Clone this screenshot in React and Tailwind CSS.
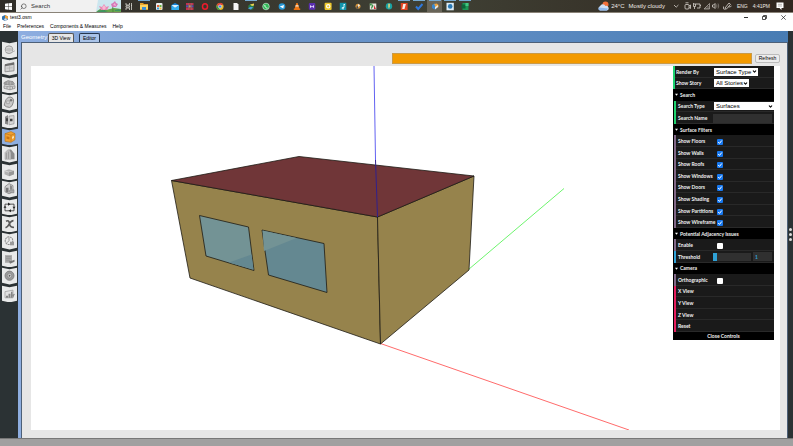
import React from "react";
import { ChevronDown, Search } from "lucide-react";

/* ---------- taskbar ---------- */

const taskIcons = [
  { name: "Task view", art: (<g fill="none" stroke="#d8d8d0" strokeWidth="0.8"><path d="M1 1v2h3.500V1M1 8V6h3.500v2M1 3.800h3.500v1.400H1zM6.500 1v7M6 3.500h1" /></g>) },
  { name: "File Explorer", running: true, art: (<><path d="M0 1h3l1 1h4v6H0z" fill="#e9a52d" /><path d="M0 3h8v4H0z" fill="#fbd565" /><path d="M2 5h4v3H2z" fill="#3d91d8" /></>) },
  { name: "Store", art: (<><rect x="1" y="1" width="6.500" height="7" rx="1" fill="#e9eef0" /><path d="M2 3h2v2H2z" fill="#e4603a" /><path d="M4.500 3h2v2h-2z" fill="#67b33c" /><path d="M2 5.500h2v2H2z" fill="#359de0" /><path d="M4.500 5.500h2v2h-2z" fill="#f0b83a" /></>) },
  { name: "Mail", art: (<><path d="M0.500 3L4 1l4 2v5H.5z" fill="#1683d8" /><path d="M.5 3h7.500L4 6z" fill="#d9f1ff" /><path d="M.5 3.500L4 6l4-2.500V8H.5z" fill="#32aef0" /></>) },
  { name: "Archives", art: (<><path d="M0 1h7.500v2.300H0z" fill="#c3314f" /><path d="M0 3.300h7.500v2.200H0z" fill="#5b4bb0" /><path d="M0 5.500h7.500V8H0z" fill="#c3314a" /><path d="M2 1h1v7H2zM5 1h1v7H5z" fill="#8a7a5a" opacity=".6" /><path d="M3.200 3.300h1.300v2.200H3.200z" fill="#d5b24a" /></>) },
  { name: "Opera", art: (<ellipse cx="4" cy="4.500" rx="2.500" ry="2.800" fill="none" stroke="#ee1c2c" strokeWidth="1.500" />) },
  { name: "Chrome", art: (<><circle cx="4" cy="4.500" r="3.600" fill="#e4b92b" /><path d="M.8 3A3.600 3.600 0 0 1 7.400 3H4L2.500 5.500z" fill="#de4336" /><path d="M.8 3l2 3.200 1.500 1.900A3.600 3.600 0 0 1 .8 3" fill="#299d50" /><circle cx="4" cy="4.500" r="1.600" fill="#3f83e8" stroke="#fff" strokeWidth="0.500" /></>) },
  { name: "Document", art: (<path d="M1.500 1H5l1.500 1.500V8h-5z" fill="#f6f6f6" />) },
  { name: "Downloads", running: true, art: (<><circle cx="4" cy="5" r="2.800" fill="#2a7c46" /><path d="M1 6.500l2-1.500 3 0-2 2.500z" fill="#4c9be4" /><path d="M3 2.500l4-1v2L5 4z" fill="#e8d352" /></>) },
  { name: "WhatsApp", art: (<><circle cx="4" cy="4.500" r="3.300" fill="#31b957" stroke="#dff4e4" strokeWidth="0.600" /><path d="M2.800 3c0 2 1 3 2.700 3.200" fill="none" stroke="#fff" strokeWidth="0.900" /></>) },
  { name: "Telegram", art: (<><circle cx="4" cy="4.500" r="3.300" fill="#2798d5" /><path d="M1.800 4.500L6 3 5.300 6.500 3.700 5.500z" fill="#fff" /></>) },
  { name: "Media player", art: (<><path d="M3.400 1h1.200L6.500 7h-5z" fill="#f07a16" /><path d="M2.700 3.300h2.600l.5 1.300H2.200z" fill="#f5ebdd" /><path d="M.8 6.500h6.400V8H.8z" fill="#e77212" /></>) },
  { name: "Video editor", art: (<><rect x=".8" y="1" width="6.500" height="6.800" rx="1" fill="#5b2fae" /><path d="M2 3l2 1.400L6 3v3L4 4.800 2 6z" fill="#e4d9fa" /></>) },
  { name: "Capture", art: (<><rect x=".6" y=".8" width="7" height="7.200" rx="1" fill="#edc72b" /><circle cx="4.200" cy="4.300" r="1.700" fill="none" stroke="#fff" strokeWidth="1.100" /></>) },
  { name: "Music", art: (<><rect x=".8" y=".8" width="6.500" height="7.200" fill="#1295ad" /><path d="M5 2v3.500H3.200v1.300H5M5 2.500h1" fill="none" stroke="#e5fbff" strokeWidth=".9" /></>) },
  { name: "Modeler", art: (<><circle cx="4" cy="4.300" r="2.500" fill="#d1923c" /><path d="M4 2l2.200 1.500L4 5z" fill="#f0ede5" /><path d="M2 5l2-1v3z" fill="#474b58" /></>) },
  { name: "Charts", art: (<><path d="M.8 1.500h6.500v6H.8z" fill="#e6e6dd" /><path d="M3.500 2l1 2-2 3-.5-1z" fill="#3b8f46" /><path d="M.8 1.500h2v2h-2z" fill="#3b8f46" /><path d="M5 3l2 4H5z" fill="#d62c32" /></>) },
  { name: "Energy", art: (<><circle cx="4" cy="4.300" r="3.200" fill="#1ba3a3" /><path d="M3.300 1.800h1.500v2.500L4 7l-.7-2z" fill="#f3d878" /></>) },
  { name: "PDF reader", running: true, art: (<><rect x=".8" y="1" width="6.800" height="7" fill="#e34623" /><path d="M3.200 2h2.700L4.500 7H2.200z" fill="#f5ede8" /></>) },
  { name: "To do", running: true, art: (<path d="M1 4.500L3.200 7 7.500 2" fill="none" stroke="#2f78db" strokeWidth="2" />) },
  { name: "Energy modeling application", running: true, active: true, art: (<><path d="M1 3l2.500-1.500L6 3v3L3.500 7.500 1 6z" fill="#3b88ce" /><path d="M3.200 2l2.500-.5L7.500 3v2L5 6z" fill="#f0a33b" /><path d="M4 5l3-2v2L4 7.500z" fill="#e9e6df" /></>) },
  { name: "Package manager", running: true, art: (<><rect x=".5" y=".8" width="7.300" height="7.500" fill="#dcecf6" /><circle cx="4.200" cy="4.400" r="2.300" fill="#2b7ab6" /></>) },
  { name: "Spreadsheet", running: true, art: (<><path d="M1.500 1h6v7h-6z" fill="#1d9856" /><path d="M.5 2.500h4v4h-4z" fill="#0d643a" /><path d="M4.500 1h3v3h-3z" fill="#42c783" /></>) },
];

function Taskbar() {
  return (
    <header className="flex h-[13px] shrink-0 items-stretch border-b border-[#8a8378] bg-[linear-gradient(90deg,#302d28,#3f4034_55%,#30261f)] text-[6px] leading-[12px] text-white">
      <button aria-label="Start" className="flex w-4 items-center justify-center">
        <svg viewBox="0 0 8 8" className="size-[7px]" fill="#fff">
          <path d="M0 .8l3.700-.5v3.400H0zM4.200.2L8 0v3.700H4.200zM0 4.200h3.700v3.500L0 7.200zM4.200 4.200H8V8l-3.800-.4z" />
        </svg>
      </button>
      <div className="flex w-[105px] items-center bg-[#f1f1f1] text-[#333]">
        <label className="flex min-w-0 flex-1 items-center gap-1 pl-1">
          <Search className="size-[7px] shrink-0 -scale-x-100" strokeWidth={2} />
          <input aria-label="Search" placeholder="Search" className="h-3 w-full min-w-0 text-[6px] leading-[12px] outline-none placeholder:text-[#333]" />
        </label>
        <svg viewBox="0 0 25 12" className="h-3 w-[25px] shrink-0">
          <path d="M2 0h23v12H0z" fill="#cbe6ef" />
          <path d="M0 12l4-3 6 1 8-2 7 1v3z" fill="#69a64c" />
          <path d="M17 12c0-4-1-5 1-7M8 11l2-2" stroke="#488a3c" fill="none" />
          <path d="M3 6l3 1 2-3 2 3 3-1-2 4H5z" fill="#e889b4" />
          <path d="M6 8l2-3 2 3-2 2z" fill="#f8bad3" />
          <path d="M15 4l2-1 2-2 1 2 2 1-2 3h-4z" fill="#d477b7" />
          <path d="M17 5l2-2 1 3z" fill="#f6afd5" />
          <path d="M1 11l6-1 5 1-3 1H2zM19 10l4-1 2 2h-6z" fill="#3f9460" />
        </svg>
      </div>
      <nav aria-label="Running programs" className="flex w-[352px] shrink-0">
        {taskIcons.map((t) => (
          <button key={t.name} aria-label={t.name} className={`flex flex-1 flex-col items-center ${t.active ? "bg-[#686458]" : ""}`}>
            <span className={`h-px w-3 shrink-0 ${t.running ? "bg-[#76a9d0]" : ""}`} />
            <svg viewBox="0 0 8 9" className="mt-px h-[9px] w-2">{t.art}</svg>
          </button>
        ))}
      </nav>
      <div className="flex flex-1 items-center justify-end text-[#eeeae4]">
        <button className="mr-2 flex items-center gap-[2px] whitespace-nowrap">
          <svg viewBox="0 0 11 10" className="h-[10px] w-[11px]">
            <circle cx="7.500" cy="3.500" r="3" fill="#f2703a" />
            <path d="M2 9.500a2.300 2.300 0 0 1 0-4.300A3 3 0 0 1 7.500 5 2.300 2.300 0 0 1 9 9.500z" fill="#cfe0f5" />
            <path d="M2 9.500a2 2 0 0 1-1-3l9 1-1 2z" fill="#8fb8ec" />
          </svg>
          <span>24°C</span>
          <span className="ml-[2px]">Mostly cloudy</span>
        </button>
        <svg viewBox="0 0 60 10" className="mr-1 h-[10px] w-[60px]" fill="none" stroke="#d9d4ce" strokeWidth="0.800">
          <path d="M1 4l2.200 2.200L5.400 4" />
          <rect x="12" y="3.500" width="4" height="4.500" rx="1" />
          <path d="M12.500 1.800h3M16 5l1.500-1v3.500L16 6.500" />
          <path d="M21 3h6v4h-3M27 4.500h1M20.500 2v3.500h2V3M21.500 5.500v2.500" />
          <path d="M31 8h5.500V2.500zM33 8V6.500M35 8V5" opacity=".7" />
          <path d="M39.500 4h1L42 2.500v5L40.500 6h-1z" />
          <path d="M43.500 3.500q1 1.500 0 3M45 2.500q1.500 2.500 0 5" opacity=".5" />
          <path d="M52 7l4-5 1.500 1.300-4 4.700zM50.500 5.500q-1 3 2 3M55.500 6q2 0 3-1" />
        </svg>
        <span className="mr-[5px] text-[5px]">ENG</span>
        <span className="mr-[6px] text-[5px]">4:41PM</span>
        <button aria-label="Notifications" className="mr-[9px]">
          <svg viewBox="0 0 8 8" className="size-2">
            <path d="M.5.5h7v5.500h-2V8L3.500 6h-3z" fill="#fff" />
            <path d="M2 2.300h4M2 4h4" stroke="#8b857f" strokeWidth=".6" />
          </svg>
        </button>
      </div>
    </header>
  );
}

/* ---------- window chrome ---------- */

function WindowHeader() {
  return (
    <div className="h-[18px] shrink-0 bg-white text-[5px] leading-[9px] text-black">
      <div className="flex h-[9px] items-center pl-[2px]">
        <svg viewBox="0 0 6 6" className="mr-[2px] size-[6px]">
          <path d="M0 1.500L3 0l3 1.500v3L3 6 0 4.500z" fill="#2e72ae" />
          <path d="M3 0l3 1.500V4L3 3z" fill="#f0a23a" />
          <path d="M2 4l2-1 1 1.500L3 6z" fill="#dcdfe5" />
        </svg>
        <h1>test3.osm</h1>
        <div className="ml-auto flex w-[49px] items-center justify-between pr-[7px]">
          <button aria-label="Minimize" className="h-px w-1 bg-[#333]" />
          <button aria-label="Restore" className="size-[5px]">
            <svg viewBox="0 0 5 5" fill="none" stroke="#222" strokeWidth=".8"><path d="M.5 1.500h3v3h-3zM1.500 1.500v-1h3v3h-1" /></svg>
          </button>
          <button aria-label="Close" className="size-[5px]">
            <svg viewBox="0 0 5 5" stroke="#222" strokeWidth=".7"><path d="M.3.3l4.400 4.400M4.700.3L.3 4.700" /></svg>
          </button>
        </div>
      </div>
      <nav aria-label="Menu" className="flex gap-[6px] pl-[3px]">
        <button>File</button>
        <button>Preferences</button>
        <button>Components &amp; Measures</button>
        <button>Help</button>
      </nav>
    </div>
  );
}

/* ---------- left tool strip ---------- */

const tools = [
  { name: "Site", art: (<><circle cx="7" cy="7" r="3.800" fill="#c2c2c2" stroke="#959595" strokeWidth=".8" /><path d="M4 5.500q3-2 6 0M3.500 8.500q4 2 7 0" fill="none" stroke="#e8e8e8" strokeWidth=".7" /><path d="M9 10l4-2" stroke="#aaa" strokeWidth=".8" /></>) },
  { name: "Schedules", art: (<><path d="M3 5l9-2v8l-9 1z" fill="#d2d2d2" stroke="#8a8a8a" strokeWidth=".8" /><path d="M3 4.500l9-1.500v2L3 6.500z" fill="#6d6d6d" /><path d="M4.500 8.500l6-.5M7.500 6.500v5" stroke="#aaa" strokeWidth=".6" /></>) },
  { name: "Constructions", art: (<><path d="M2 5l4-2 5 1 1.500 2.500-4.500 1-6-1z" fill="#b0b0b0" stroke="#777" strokeWidth=".6" /><path d="M2 8l5 1 6-1v2.500l-5 1.500-6-1.500z" fill="#d3d3d3" stroke="#777" strokeWidth=".6" /><path d="M4 4v3M7 4v3M10 4v3M5 9v2M8 9.500v2.500M10.500 9v2" stroke="#777" strokeWidth=".6" /></>) },
  { name: "Loads", art: (<><path d="M4 5q2-3.500 5-2.500t2.500 4-2 5-5 .5-2-3z" fill="#c9c9c9" stroke="#777" strokeWidth=".8" /><circle cx="6" cy="7.500" r="2" fill="#9a9a9a" /><circle cx="9" cy="5.500" r="1.200" fill="#777" /><path d="M6 6v3M4.500 7.500h3M11 3l2 1" stroke="#eee" strokeWidth=".7" /></>) },
  { name: "Space types", art: (<><path d="M3 4l3-1.500v9.500l-3-1z" fill="#888" /><path d="M7 3.500l5-.5v8l-5 1z" fill="#d8d8d8" stroke="#888" strokeWidth=".6" /><path d="M8 6h2.500v2.500H8zM4 5.500h2v3H4z" fill="#444" /></>) },
  { name: "Geometry", active: true, art: (<><path d="M3 4l6-2 4 2v6l-4 2.500-6-1z" fill="#f3a02f" stroke="#b87318" strokeWidth=".6" /><path d="M3 4l6 1.500V12M9 5.500L13 4" fill="none" stroke="#b87318" strokeWidth=".6" /><path d="M4.500 6.500l3 .7v2.500l-3-.7z" fill="#c87414" /><path d="M10 7l2-.8v2l-2 1z" fill="#fde3b1" /></>) },
  { name: "Facility", art: (<><path d="M3 6l3-3 3 2v7.500H3z" fill="#bdbdbd" stroke="#999" strokeWidth=".5" /><path d="M7 3h2l3.500 4v5.500H9V6z" fill="#8c8c8c" /><path d="M4.500 6v6M6.500 5v7" stroke="#8a8a8a" strokeWidth=".6" /></>) },
  { name: "Spaces", art: (<><path d="M2.500 6l4.500-1.500L12 6v3.500l-5 2-4.500-2z" fill="#b1b1b1" /><path d="M2.500 6L7 7.500 12 6" fill="none" stroke="#ddd" strokeWidth=".8" /><path d="M7 7.500v4L12 9.500V6z" fill="#979797" /></>) },
  { name: "Thermal zones", art: (<><path d="M3 5l4-3 4 2v6l-4 2-4-2z" fill="#d0d0d0" stroke="#777" strokeWidth=".7" /><path d="M4 6h2.500v5L4 10z" fill="#777" /><path d="M8 3.500l2 1V8H8z" fill="#8a8a8a" /><path d="M7 9l5-1v3H8z" fill="#aaa" stroke="#777" strokeWidth=".5" /></>) },
  { name: "HVAC systems", art: (<><path d="M3 4.500h9v6.500H3z" fill="none" stroke="#444" strokeWidth=".9" /><path d="M6 3v3l2.500-1.500zM9 9.500v3L6.500 11zM1.500 8L3 6l1.500 2zM10.500 7L12 9l1.500-2z" fill="#222" /></>) },
  { name: "Variables", art: (<path d="M4 4.500q3-1.500 3.500 2.500T12 10.500M11.500 4Q9 4 7.500 7T3.500 11" fill="none" stroke="#5a5a5a" strokeWidth="1.600" />) },
  { name: "Simulation settings", art: (<><circle cx="7" cy="7" r="3.800" fill="none" stroke="#8a8a8a" strokeWidth="1" strokeDasharray="2 .6" /><path d="M7 4v3l-2 2" fill="none" stroke="#888" strokeWidth=".8" /><path d="M8 8h4v3.500H8z" fill="#999" /></>) },
  { name: "Measures", art: (<><path d="M3 3.500h7V11H3z" fill="#aaa" /><path d="M4 5h5M4 7h5M4 9h4" stroke="#8a8a8a" strokeWidth=".6" /><path d="M7 9.500q3-.5 5.500-1.500v2L8 12z" fill="#777" /></>) },
  { name: "Run simulation", art: (<><circle cx="7.500" cy="7" r="4.500" fill="#9b9b9b" stroke="#7a7a7a" strokeWidth=".8" /><circle cx="7.500" cy="7" r="2.300" fill="#ccc" stroke="#7a7a7a" strokeWidth=".6" /><path d="M6.800 5.800l2 1.200-2 1.200z" fill="#555" /></>) },
  { name: "Results summary", art: (<><path d="M3 5l8-1.500V11H3z" fill="#e2e2e2" stroke="#999" strokeWidth=".7" /><path d="M4 9h2v2H4zM6.500 7h2v4h-2zM9 5h1.500v6H9z" fill="#858585" /><path d="M10 8l3-1-2 4z" fill="#888" /></>) },
];

function ToolStrip() {
  return (
    <aside className="w-[18px] shrink-0 bg-[#2b3234] pt-[10px]">
      <nav aria-label="Tools" className="flex h-[261px] flex-col">
        {tools.map((t) => (
          <button key={t.name} aria-label={t.name} className="flex min-h-0 flex-1 pl-[2px]">
            <svg viewBox="0 0 16 17" preserveAspectRatio="none" className="h-full w-4">
              <path
                d={t.active ? "M0 .8l7.500 1.500L16 .8v14.700l-8.500 1.500L0 15.500z" : "M0 .8l7.500 1.500L15 .8v14.700l-7.500 1.500L0 15.500z"}
                fill={t.active ? "#8eaee0" : "#e9eaea"}
              />
              <g transform="translate(0 1.500)">{t.art}</g>
            </svg>
          </button>
        ))}
      </nav>
    </aside>
  );
}

/* ---------- 3D scene ---------- */

function Scene() {
  return (
    <svg viewBox="0 0 749 364" className="block h-auto w-full" role="img" aria-label="Building model">
      <path d="M437.500 203.500L533 122.500" stroke="#5cf35c" strokeWidth=".9" />
      <path d="M349.500 277.500L598 364" stroke="#ff5a5a" strokeWidth=".9" />
      <g stroke="#1d1a14" strokeWidth=".8" strokeLinejoin="round">
        <path d="M140.500 114.500L346.500 151l3 127L159 212z" fill="#96834c" />
        <path d="M346.500 151L443 110l-5 94-88.500 74z" fill="#96834c" />
        <path d="M140.500 114.500L268 90.500 443 110l-96.500 41z" fill="#703638" />
        <path d="M168.500 149.500l49 11.500 5.500 43.500-48-14.500z" fill="#739395" />
        <path d="M231 164l62 13.500 3 49-58.500-17.500z" fill="#648891" />
      </g>
      <path d="M198 196.500l22.500-8 2 15z" fill="#648891" />
      <path d="M231.500 164.500l34 7.500-32.500 13z" fill="#739395" />
      <path d="M343 0L344.500 94" stroke="#5050ef" strokeWidth=".9" />
      <path d="M344.500 94L346.500 151" stroke="#30208c" strokeWidth="1" />
    </svg>
  );
}

/* ---------- control panel ---------- */

function Title({ children }) {
  return (
    <button className="flex min-h-0 flex-1 items-center gap-[2px] bg-black pl-[2px] text-left">
      <svg viewBox="0 0 4 4" className="size-[3px]"><path d="M0 1h4L2 3.500z" fill="#fff" /></svg>
      {children}
    </button>
  );
}

const edges = {
  green: "border-[#1ed36f]",
  purple: "border-[#806787]",
  blue: "border-[#2fa1d6]",
};

function Row({ label, id, edge, nested = true, children }) {
  return (
    <div className={`flex min-h-0 flex-1 ${nested ? "pl-px" : ""} bg-black`}>
      <div className={`flex min-w-0 flex-1 items-center border-l-2 bg-[#1a1a1a] shadow-[inset_0_-1px_0_#292929] ${nested ? "pl-[2px]" : "pl-px"} ${edges[edge]}`}>
        <label htmlFor={id} className={`shrink-0 whitespace-nowrap ${nested ? "w-[35px]" : "w-[37px]"}`}>{label}</label>
        {children}
      </div>
    </div>
  );
}

function Picker({ id, value, options, width }) {
  return (
    <span className={`relative ml-px flex h-2 items-center bg-white font-['Liberation_Sans',sans-serif] font-normal text-black ${width}`}>
      <select id={id} defaultValue={value} className="h-2 w-full appearance-none pl-[2px] text-[6px] leading-[8px] outline-none">
        {options.map((o) => <option key={o}>{o}</option>)}
      </select>
      <ChevronDown className="pointer-events-none absolute right-px size-[5px]" strokeWidth={5} />
    </span>
  );
}

function CheckRow({ label, checked }) {
  const id = label.toLowerCase().replaceAll(" ", "-");
  return (
    <Row label={label} id={id} edge="purple">
      <span className="relative ml-1 mt-[2px] flex size-[6px]">
        <input id={id} type="checkbox" defaultChecked={checked} className="peer size-[6px] appearance-none rounded-[1px] bg-white checked:bg-[#1677ee]" />
        <svg viewBox="0 0 6 6" className="pointer-events-none absolute inset-0 hidden peer-checked:block" fill="none" stroke="#fff" strokeWidth="1">
          <path d="M1.200 3l1.300 1.400L4.800 1.500" />
        </svg>
      </span>
    </Row>
  );
}

function ActionRow({ label }) {
  return (
    <div className="flex min-h-0 flex-1 bg-black pl-px">
      <button className="flex-1 border-l-2 border-[#e61d5f] bg-[#1a1a1a] pl-[2px] text-left shadow-[inset_0_-1px_0_#292929]">{label}</button>
    </div>
  );
}

const filters = ["Show Floors", "Show Walls", "Show Roofs", "Show Windows", "Show Doors", "Show Shading", "Show Partitions", "Show Wireframe"];

function ControlPanel() {
  return (
    <section aria-label="Controls" className="absolute top-0 right-[6px] w-[101px] bg-black font-['Lato',sans-serif] text-[5px] leading-[8px] font-bold text-[#f2f2f2]">
      <div className="flex h-[266px] flex-col">
        <Row label="Render By" id="render-by" edge="green" nested={false}>
          <Picker id="render-by" value="Surface Type" options={["Surface Type", "Normal", "Boundary", "Construction"]} width="w-[44px]" />
        </Row>
        <Row label="Show Story" id="show-story" edge="green" nested={false}>
          <Picker id="show-story" value="All Stories" options={["All Stories"]} width="w-[35px]" />
        </Row>
        <Title>Search</Title>
        <Row label="Search Type" id="search-type" edge="green">
          <Picker id="search-type" value="Surfaces" options={["Surfaces", "Spaces"]} width="min-w-0 flex-1" />
        </Row>
        <Row label="Search Name" id="search-name" edge="green">
          <input id="search-name" type="text" className="mr-[2px] h-[9px] w-0 min-w-0 flex-1 bg-[#303030] px-[2px] outline-none" />
        </Row>
        <Title>Surface Filters</Title>
        {filters.map((f) => <CheckRow key={f} label={f} checked />)}
        <Title>Potential Adjacency Issues</Title>
        <CheckRow label="Enable" />
        <Row label="Threshold" id="threshold" edge="blue">
          <input
            id="threshold"
            type="range"
            min="0"
            max="100"
            defaultValue="0"
            className="h-2 w-[38px] shrink-0 appearance-none bg-[#303030] [&::-webkit-slider-thumb]:h-2 [&::-webkit-slider-thumb]:w-1 [&::-webkit-slider-thumb]:appearance-none [&::-webkit-slider-thumb]:bg-[#2fa1d6]"
          />
          <input aria-label="Threshold value" type="text" defaultValue="1" className="mr-[2px] ml-[2px] h-[9px] w-0 min-w-0 flex-1 bg-[#303030] pl-[2px] text-[#2fa1d6] outline-none" />
        </Row>
        <Title>Camera</Title>
        <CheckRow label="Orthographic" />
        {["X View", "Y View", "Z View", "Reset"].map((v) => <ActionRow key={v} label={v} />)}
      </div>
      <button className="block w-full text-center">Close Controls</button>
    </section>
  );
}

/* ---------- page ---------- */

export default function App() {
  return (
    <div className="flex min-h-screen flex-col bg-[#2b3234] font-['Liberation_Sans',sans-serif]">
      <Taskbar />
      <WindowHeader />
      <div className="flex flex-1">
        <ToolStrip />
        <main className="flex min-w-0 flex-1 flex-col bg-[linear-gradient(90deg,#8eaee0,#7099cf_30%,#487cb3)]">
          <div className="flex h-[11px] items-end pl-[3px] text-[5px] leading-[8px]">
            <h2 className="mr-[2px] w-[25px] text-[6px] leading-[10px] text-white">Geometry</h2>
            <button className="mr-[5px] h-[9px] w-[26px] rounded-t-[2px] border border-b-0 border-[#555] bg-[#e6e6e6] text-center text-black">3D View</button>
            <button className="h-[9px] w-[21px] rounded-t-[2px] border border-b-0 border-[#26374f] bg-[#a9c3e8] text-center text-black">Editor</button>
          </div>
          <div className="flex flex-1 bg-[#8eaee0] pl-[3px]">
            <section className="flex min-w-0 flex-1 flex-col border-t border-r border-l border-[#4d6078] bg-[#e6e6e6] pt-[10px] pr-[7px] pb-[7px] pl-[9px]">
              <div className="mb-[2px] flex items-center justify-end gap-[3px]">
                <div role="progressbar" aria-label="Loading" aria-valuenow={100} className="h-[11px] w-[48%] border border-[#c99a48] bg-[#f39a00]" />
                <button className="h-[9px] w-[25px] rounded-[2px] border border-[#bbb] bg-[#ececec] text-[5px] leading-[7px] text-black">Refresh</button>
              </div>
              <div className="relative bg-white">
                <Scene />
                <ControlPanel />
              </div>
            </section>
          </div>
        </main>
        <aside className="flex w-[5px] shrink-0 flex-col items-center justify-center gap-[2px] bg-[#2b3234]">
          <span className="size-[3px] rounded-full bg-[#ddd]" />
          <span className="size-[3px] rounded-full bg-[#ddd]" />
          <span className="size-[3px] rounded-full bg-[#ddd]" />
        </aside>
      </div>
      <footer className="h-2 shrink-0 border-t border-[#777] bg-[#a0a0a0]" />
    </div>
  );
}
